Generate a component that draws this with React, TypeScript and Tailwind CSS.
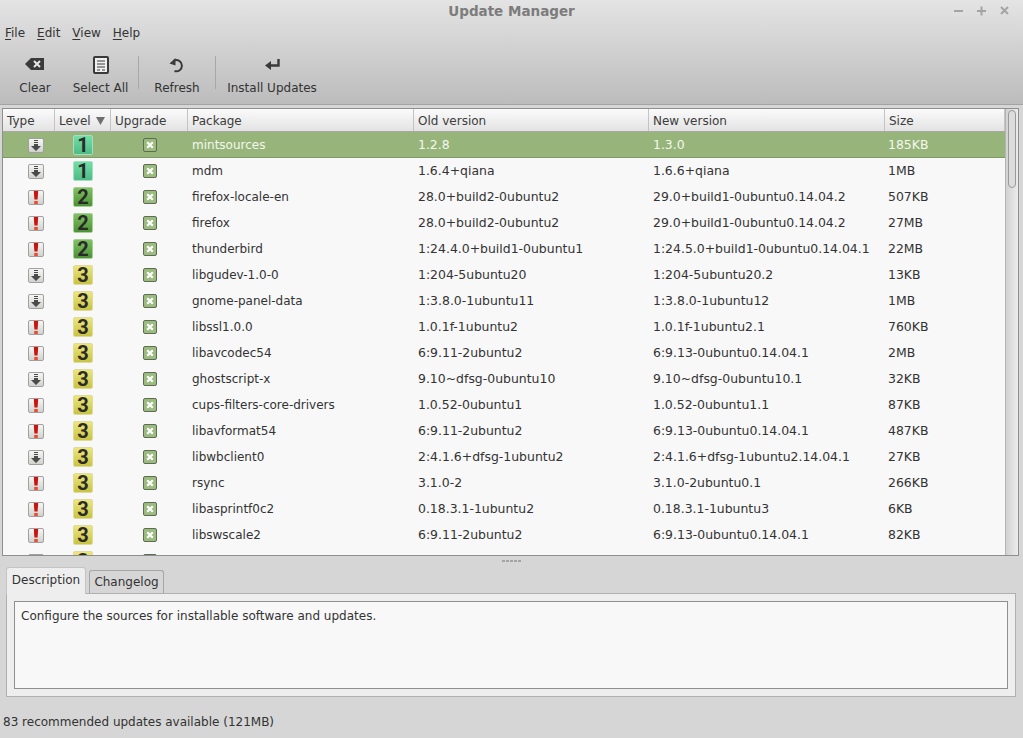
const rows: [string, number, string, string, string, string][] = [
  ["u", 1, "mintsources", "1.2.8", "1.3.0", "185KB"],
  ["u", 1, "mdm", "1.6.4+qiana", "1.6.6+qiana", "1MB"],
  ["s", 2, "firefox-locale-en", "28.0+build2-0ubuntu2", "29.0+build1-0ubuntu0.14.04.2", "507KB"],
  ["s", 2, "firefox", "28.0+build2-0ubuntu2", "29.0+build1-0ubuntu0.14.04.2", "27MB"],
  ["s", 2, "thunderbird", "1:24.4.0+build1-0ubuntu1", "1:24.5.0+build1-0ubuntu0.14.04.1", "22MB"],
  ["u", 3, "libgudev-1.0-0", "1:204-5ubuntu20", "1:204-5ubuntu20.2", "13KB"],
  ["u", 3, "gnome-panel-data", "1:3.8.0-1ubuntu11", "1:3.8.0-1ubuntu12", "1MB"],
  ["s", 3, "libssl1.0.0", "1.0.1f-1ubuntu2", "1.0.1f-1ubuntu2.1", "760KB"],
  ["s", 3, "libavcodec54", "6:9.11-2ubuntu2", "6:9.13-0ubuntu0.14.04.1", "2MB"],
  ["u", 3, "ghostscript-x", "9.10~dfsg-0ubuntu10", "9.10~dfsg-0ubuntu10.1", "32KB"],
  ["s", 3, "cups-filters-core-drivers", "1.0.52-0ubuntu1", "1.0.52-0ubuntu1.1", "87KB"],
  ["s", 3, "libavformat54", "6:9.11-2ubuntu2", "6:9.13-0ubuntu0.14.04.1", "487KB"],
  ["u", 3, "libwbclient0", "2:4.1.6+dfsg-1ubuntu2", "2:4.1.6+dfsg-1ubuntu2.14.04.1", "27KB"],
  ["s", 3, "rsync", "3.1.0-2", "3.1.0-2ubuntu0.1", "266KB"],
  ["s", 3, "libasprintf0c2", "0.18.3.1-1ubuntu2", "0.18.3.1-1ubuntu3", "6KB"],
  ["s", 3, "libswscale2", "6:9.11-2ubuntu2", "6:9.13-0ubuntu0.14.04.1", "82KB"],
  ["u", 3, "", "", "", ""],
];

const columns = "grid grid-cols-[52px_56px_77px_226px_235px_236px_1fr]";

const TypeIcon = ({ kind }: { kind: string }) => (
  <div className="flex h-[15px] w-4 items-center justify-center rounded-[2px] border border-[#a0a0a0] bg-gradient-to-b from-[#f6f6f4] to-[#d2d2cd]">
    {kind === "u" ? (
      <svg width="10" height="11" viewBox="0 0 10 11">
        <path d="M3 0h4v1H3zM3 2h4v1H3zM3 4h4v2h3L5 11 0 6h3z" fill="#4a4a4a" />
      </svg>
    ) : (
      <svg width="6" height="13" viewBox="0 0 6 13">
        <path d="M0.8 0h4.4L4.6 8.5H1.4z" fill="#c9140f" />
        <path d="M1.2 10h3.6v3H1.2z" fill="#ec4a32" />
      </svg>
    )}
  </div>
);

const LevelBadge = ({ level }: { level: number }) => {
  const bg =
    level === 1
      ? "from-[#72dfa7] to-[#4dbb85] border-[#a9dcc0]"
      : level === 2
        ? "from-[#80c263] to-[#4b9235] border-[#a7cf97]"
        : "from-[#ece67c] to-[#c9c441] border-[#dedba0]";
  return (
    <div
      className={`flex h-5 w-5 items-center justify-center rounded-[2px] border bg-gradient-to-b pb-px font-['Roboto',sans-serif] text-[20px] font-bold leading-none text-[#2a2a2a] ${bg}`}
    >
      {level}
    </div>
  );
};

const Check = () => (
  <div className="flex h-[14px] w-[14px] items-center justify-center rounded-[2px] border border-[#5e6b55] bg-[#9bbb7f]">
    <svg width="8" height="8" viewBox="0 0 8 8">
      <path d="M1.2 1.2l5.6 5.6M6.8 1.2L1.2 6.8" stroke="#ffffff" strokeWidth="2.2" />
    </svg>
  </div>
);

const ToolButton = ({ label, icon, className }: { label: string; icon: React.ReactNode; className: string }) => (
  <div className={`flex flex-col items-center ${className}`}>
    <div className="flex h-[26px] items-center">{icon}</div>
    <div className="mt-[2px] whitespace-nowrap leading-[16px]">{label}</div>
  </div>
);

const Sep = () => <div className="mt-[4px] h-[33px] w-px bg-[#a8a8a8]" />;

const Menu = ({ first, rest }: { first: string; rest: string }) => (
  <span>
    <span className="underline underline-offset-2">{first}</span>
    {rest}
  </span>
);

export default function App() {
  return (
    <div className="flex h-[738px] w-[1023px] flex-col overflow-hidden bg-[#d6d6d6] font-['DejaVu_Sans',sans-serif] text-[12px] text-[#333333]">
      <div className="h-[105px] shrink-0 border-b border-[#a3a3a3] bg-gradient-to-b from-[#e4e4e4] to-[#bcbcbc]">
        <div className="relative flex h-[22px] items-center justify-center text-[13.5px] font-bold text-[#7c7c7c]">
          Update Manager
          <div className="absolute right-[13px] top-[5px] flex gap-[12px]">
            <svg width="11" height="11" viewBox="0 0 11 11">
              <path d="M1 6h9" stroke="#a4a4a4" strokeWidth="2" />
            </svg>
            <svg width="11" height="11" viewBox="0 0 11 11">
              <path d="M1 6h9M5.5 1.5v9" stroke="#a4a4a4" strokeWidth="2" />
            </svg>
            <svg width="11" height="11" viewBox="0 0 11 11">
              <path d="M2 2l7 7M9 2l-7 7" stroke="#a4a4a4" strokeWidth="2" />
            </svg>
          </div>
        </div>
        <div className="flex h-[21px] items-center gap-[12px] pl-[5px]">
          <Menu first="F" rest="ile" />
          <Menu first="E" rest="dit" />
          <Menu first="V" rest="iew" />
          <Menu first="H" rest="elp" />
        </div>
        <div className="mt-[9px] flex items-start">
          <ToolButton
            label="Clear"
            className="ml-[20px] w-[30px]"
            icon={
              <svg width="20" height="14" viewBox="0 0 20 14" className="-mt-[2px]">
                <path d="M6 1h13v12H6L0 7z" fill="#3a3a3a" />
                <path d="M9 4l6 6M15 4l-6 6" stroke="#e6e6e6" strokeWidth="2" />
              </svg>
            }
          />
          <ToolButton
            label="Select All"
            className="ml-[23px] w-[55px]"
            icon={
              <svg width="16" height="18" viewBox="0 0 16 18">
                <rect x="1" y="1" width="14" height="16" rx="1" fill="#efefef" stroke="#3a3a3a" strokeWidth="2" />
                <path d="M4 5h8M4 8h8M4 11h8M4 14h3M9 14h3" stroke="#3a3a3a" strokeWidth="1" />
              </svg>
            }
          />
          <div className="ml-[10px]">
            <Sep />
          </div>
          <ToolButton
            label="Refresh"
            className="ml-[16px] w-[44px]"
            icon={
              <svg width="16" height="16" viewBox="0 0 16 16">
                <path d="M5 3.6A5.6 5.6 0 1 1 5.5 14" fill="none" stroke="#3a3a3a" strokeWidth="2" />
                <path d="M0.5 6.5L6.5 1v7.5z" fill="#3a3a3a" />
              </svg>
            }
          />
          <div className="ml-[16px]">
            <Sep />
          </div>
          <ToolButton
            label="Install Updates"
            className="ml-[11px] w-[90px]"
            icon={
              <svg width="15" height="12" viewBox="0 0 15 12">
                <path d="M13.5 0v6.5H5" fill="none" stroke="#3a3a3a" strokeWidth="2.4" />
                <path d="M0 6.5L6 2v9z" fill="#3a3a3a" />
              </svg>
            }
          />
        </div>
      </div>

      <div className="mx-[2px] mt-[3px] flex h-[448px] w-[1017px] shrink-0 overflow-hidden border border-[#8f8f8f] bg-[#f8f8f8]">
        <div className="flex w-[1002px] flex-col overflow-hidden">
          <div className={`${columns} h-[23px] shrink-0 border-b border-[#a8a8a8] bg-gradient-to-b from-[#fbfbfb] to-[#e3e3e3] text-[#3c3c3c]`}>
            {["Type", "Level", "Upgrade", "Package", "Old version", "New version", "Size"].map((h) => (
              <div key={h} className="flex items-center gap-[5px] border-r border-[#c4c4c4] pl-[4px] pt-px">
                {h}
                {h === "Level" && (
                  <svg width="9" height="8" viewBox="0 0 9 8">
                    <path d="M0 0h9L4.5 8z" fill="#6f6f6f" />
                  </svg>
                )}
              </div>
            ))}
          </div>
          {rows.map((r, i) => (
            <div
              key={i}
              className={`${columns} h-[26px] shrink-0 items-center ${
                i === 0 ? "bg-[#97b57b] text-[#f4f7ee] shadow-[inset_0_-1px_0_#7f9c68]" : "text-[#333333]"
              }`}
            >
              <div className="pl-[25px]">
                <TypeIcon kind={r[0]} />
              </div>
              <div className="flex justify-center">
                <LevelBadge level={r[1]} />
              </div>
              <div className="flex justify-center">
                <Check />
              </div>
              <div className="pl-[4px]">{r[2]}</div>
              <div className="pl-[4px] text-[12.45px]">{r[3]}</div>
              <div className="pl-[4px] text-[12.45px]">{r[4]}</div>
              <div className="pl-[3px] text-[12.45px]">{r[5]}</div>
            </div>
          ))}
        </div>
        <div className="flex-1 border-l border-[#b4b4b4] bg-gradient-to-r from-[#d2d2d2] to-[#ececec] px-[2px] pt-[1px]">
          <div className="h-[78px] rounded-[5px] border border-[#9a9a9a] bg-[#dcdcdc]" />
        </div>
      </div>

      <div className="flex h-[10px] shrink-0 items-center justify-center gap-[1px]">
        {[0, 1, 2, 3, 4].map((d) => (
          <div key={d} className="h-[2px] w-[3px] bg-[#a4a4a4]" />
        ))}
      </div>

      <div className="flex h-[27px] shrink-0 items-end pl-[6px]">
        <div className="z-10 -mb-px flex h-[27px] w-[80px] items-center justify-center rounded-t-[3px] border border-b-0 border-[#c4c4c4] bg-[#eeeeee] pb-[2px]">
          Description
        </div>
        <div className="ml-[3px] flex h-[23px] w-[75px] items-center justify-center rounded-t-[3px] border border-b-0 border-[#a6a6a6] bg-[#d6d6d6]">
          Changelog
        </div>
      </div>

      <div className="ml-[6px] h-[104px] w-[1010px] shrink-0 border border-[#b0b0b0] bg-[#eeeeee] px-[7px] py-[7px]">
        <div className="h-[88px] border border-[#8f8f8f] bg-[#f8f8f8] px-[6px] py-[5px]">
          Configure the sources for installable software and updates.
        </div>
      </div>

      <div className="mt-[17px] pl-[3px] leading-[16px]">83 recommended updates available (121MB)</div>
    </div>
  );
}
